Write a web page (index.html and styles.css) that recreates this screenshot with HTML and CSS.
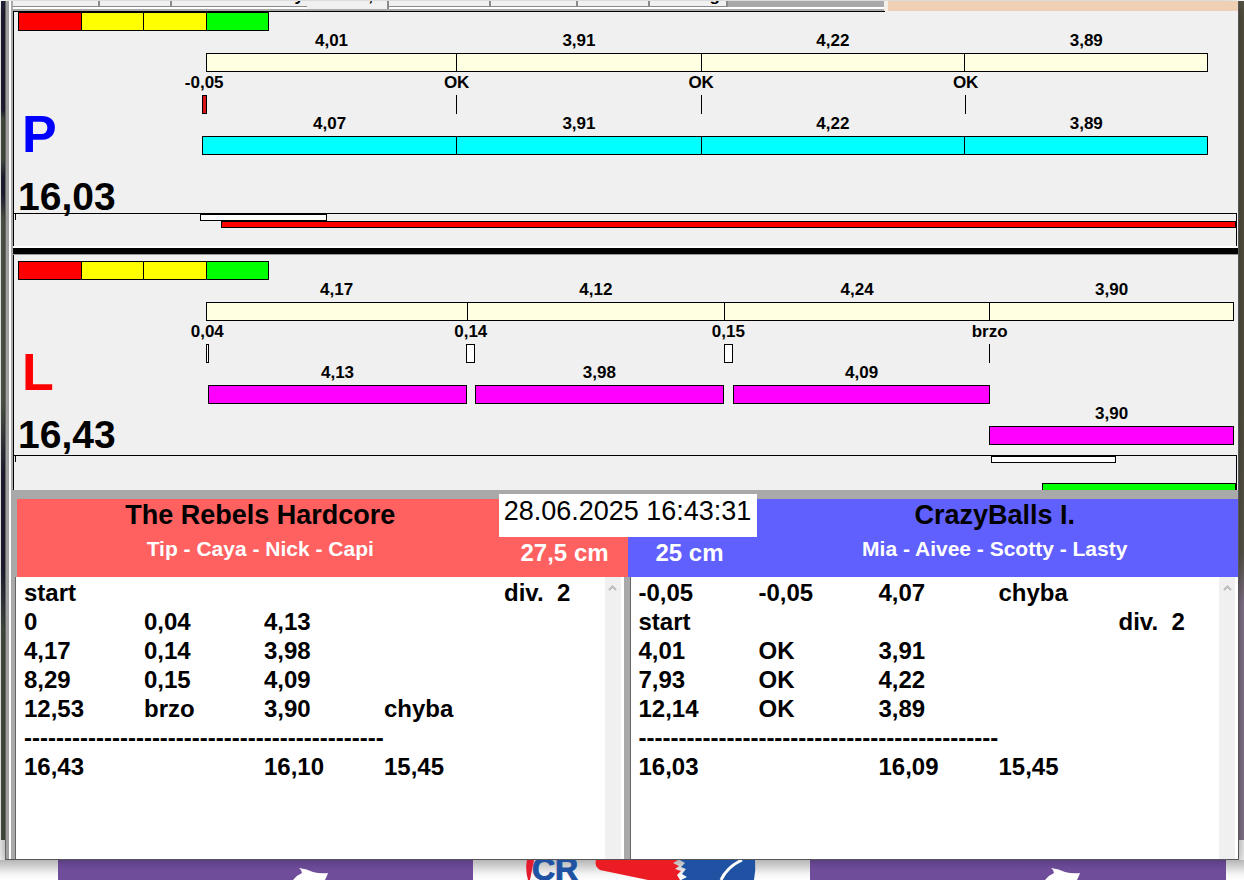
FILE: index.html
```html
<!DOCTYPE html>
<html lang="cs">
<head>
<meta charset="utf-8">
<title>The Rebels Hardcore – CrazyBalls I.</title>
<link rel="stylesheet" href="styles.css">
</head>
<body>
<main class="window">
  <div class="topbar">
    <nav class="tabs" aria-label="Karty">
      <button class="tab tab-narrow" type="button"></button>
      <button class="tab tab-short" type="button"></button>
      <button class="tab tab-wide" type="button"><span>y</span></button>
      <button class="tab tab-active" type="button"><span>,</span></button>
      <button class="tab tab-medium" type="button"></button>
      <button class="tab tab-narrow" type="button"></button>
      <button class="tab tab-short" type="button"></button>
      <button class="tab tab-last" type="button"><span>g</span></button>
    </nav>
    <div class="backdrop"></div>
  </div>

  <section class="lane" aria-label="P">
    <div class="lights"><i class="red"></i><i class="yellow"></i><i class="yellow"></i><i class="green"></i></div>
    <div class="lane-body">
      <div class="lane-side">
        <div class="lane-letter blue-letter">P</div>
        <div class="lane-total">16,03</div>
      </div>
      <div class="tracks">
        <div class="track cream">
          <span class="gap" style="flex-grow:.06"></span>
          <div class="seg" style="flex-grow:4.01"><b>4,01</b><i></i></div>
          <div class="seg" style="flex-grow:3.91"><b>3,91</b><i></i></div>
          <div class="seg" style="flex-grow:4.22"><b>4,22</b><i></i></div>
          <div class="seg" style="flex-grow:3.89"><b>3,89</b><i></i></div>
          <span class="gap" style="flex-grow:.41"></span>
        </div>
        <div class="track marks">
          <div class="mark fault" style="flex-grow:.07"><b>-0,05</b><i></i></div>
          <span class="gap" style="flex-grow:4"></span>
          <div class="mark tick"><b>OK</b><i></i></div>
          <span class="gap" style="flex-grow:3.9"></span>
          <div class="mark tick"><b>OK</b><i></i></div>
          <span class="gap" style="flex-grow:4.22"></span>
          <div class="mark tick"><b>OK</b><i></i></div>
          <span class="gap" style="flex-grow:4.29"></span>
        </div>
        <div class="track cyan">
          <div class="seg" style="flex-grow:4.07"><b>4,07</b><i></i></div>
          <div class="seg" style="flex-grow:3.91"><b>3,91</b><i></i></div>
          <div class="seg" style="flex-grow:4.22"><b>4,22</b><i></i></div>
          <div class="seg" style="flex-grow:3.89"><b>3,89</b><i></i></div>
          <span class="gap" style="flex-grow:.41"></span>
        </div>
      </div>
    </div>
    <div class="overview">
      <div class="strip"><span class="gap" style="flex-grow:186"></span><i class="white" style="flex-grow:125"></i><span class="gap" style="flex-grow:911"></span></div>
      <div class="strip"><span class="gap" style="flex-grow:207"></span><i class="red" style="flex-grow:1015"></i></div>
    </div>
  </section>

  <div class="divider"></div>

  <section class="lane lane-lower" aria-label="L">
    <div class="lights"><i class="red"></i><i class="yellow"></i><i class="yellow"></i><i class="green"></i></div>
    <div class="lane-body">
      <div class="lane-side">
        <div class="lane-letter red-letter">L</div>
        <div class="lane-total">16,43</div>
      </div>
      <div class="tracks">
        <div class="track cream">
          <span class="gap" style="flex-grow:.06"></span>
          <div class="seg" style="flex-grow:4.17"><b>4,17</b><i></i></div>
          <div class="seg" style="flex-grow:4.12"><b>4,12</b><i></i></div>
          <div class="seg" style="flex-grow:4.24"><b>4,24</b><i></i></div>
          <div class="seg" style="flex-grow:3.9"><b>3,90</b><i></i></div>
        </div>
        <div class="track marks">
          <span class="gap" style="flex-grow:.06"></span>
          <div class="mark" style="flex-grow:.04"><b>0,04</b><i></i></div>
          <span class="gap" style="flex-grow:4.12"></span>
          <div class="mark" style="flex-grow:.14"><b>0,14</b><i></i></div>
          <span class="gap" style="flex-grow:3.98"></span>
          <div class="mark" style="flex-grow:.14"><b>0,15</b><i></i></div>
          <span class="gap" style="flex-grow:4.1"></span>
          <div class="mark tick"><b>brzo</b><i></i></div>
          <span class="gap" style="flex-grow:3.9"></span>
        </div>
        <div class="track magenta">
          <span class="gap" style="flex-grow:.1"></span>
          <div class="seg" style="flex-grow:4.13"><b>4,13</b><i></i></div>
          <span class="gap" style="flex-grow:.13"></span>
          <div class="seg" style="flex-grow:3.98"><b>3,98</b><i></i></div>
          <span class="gap" style="flex-grow:.15"></span>
          <div class="seg" style="flex-grow:4.1"><b>4,09</b><i></i></div>
          <span class="gap" style="flex-grow:3.9"></span>
        </div>
        <div class="track magenta">
          <span class="gap" style="flex-grow:12.58"></span>
          <div class="seg" style="flex-grow:3.91"><b>3,90</b><i></i></div>
        </div>
      </div>
    </div>
    <div class="overview">
      <div class="strip"><span class="gap" style="flex-grow:979"></span><i class="white" style="flex-grow:123"></i><span class="gap" style="flex-grow:120"></span></div>
      <div class="strip strip-low"><span class="gap" style="flex-grow:1030"></span><i class="green" style="flex-grow:192"></i></div>
    </div>
  </section>

  <section class="results">
    <time class="clock" datetime="2025-06-28T16:43:31">28.06.2025 16:43:31</time>
    <div class="teams">
      <header class="team team-left">
        <div class="team-names"><h2>The Rebels Hardcore</h2><p>Tip - Caya - Nick - Capi</p></div>
        <div class="jump">27,5 cm</div>
      </header>
      <header class="team team-right">
        <div class="jump">25 cm</div>
        <div class="team-names"><h2>CrazyBalls I.</h2><p>Mia - Aivee - Scotty - Lasty</p></div>
      </header>
    </div>
    <div class="lists">
      <div class="list">
        <table>
          <colgroup><col span="4" class="col-value"><col></colgroup>
          <tr><td>start</td><td></td><td></td><td></td><td>div.  2</td></tr>
          <tr><td>0</td><td>0,04</td><td>4,13</td><td></td><td></td></tr>
          <tr><td>4,17</td><td>0,14</td><td>3,98</td><td></td><td></td></tr>
          <tr><td>8,29</td><td>0,15</td><td>4,09</td><td></td><td></td></tr>
          <tr><td>12,53</td><td>brzo</td><td>3,90</td><td>chyba</td><td></td></tr>
          <tr><td colspan="5">---------------------------------------------</td></tr>
          <tr><td>16,43</td><td></td><td>16,10</td><td>15,45</td><td></td></tr>
        </table>
        <div class="scroll"><svg width="9" height="6" viewBox="0 0 9 6"><path d="M1 5 4.500 1.500 8 5" fill="none" stroke="#bcbcbc" stroke-width="2"/></svg></div>
      </div>
      <div class="list">
        <table>
          <colgroup><col span="4" class="col-value"><col></colgroup>
          <tr><td>-0,05</td><td>-0,05</td><td>4,07</td><td>chyba</td><td></td></tr>
          <tr><td>start</td><td></td><td></td><td></td><td>div.  2</td></tr>
          <tr><td>4,01</td><td>OK</td><td>3,91</td><td></td><td></td></tr>
          <tr><td>7,93</td><td>OK</td><td>4,22</td><td></td><td></td></tr>
          <tr><td>12,14</td><td>OK</td><td>3,89</td><td></td><td></td></tr>
          <tr><td colspan="5">---------------------------------------------</td></tr>
          <tr><td>16,03</td><td></td><td>16,09</td><td>15,45</td><td></td></tr>
        </table>
        <div class="scroll"><svg width="9" height="6" viewBox="0 0 9 6"><path d="M1 5 4.500 1.500 8 5" fill="none" stroke="#bcbcbc" stroke-width="2"/></svg></div>
      </div>
    </div>
  </section>
</main>

<footer class="desktop">
  <div class="banner"><svg width="36" height="20" viewBox="0 0 36 20"><path d="M0 20Q4 15 9 13Q9 10 6 8Q14 9 20 12Q27 14 35 13Q34 16 32 20Z" fill="#fff"/></svg></div>
  <div class="emblem">
    <svg width="232" height="20" viewBox="0 0 232 20">
      <path d="M1 0H8L4 20H2Q-1 9 1 0Z" fill="#e31b2c"/>
      <text x="6" y="20" class="emblem-text">CR</text>
      <path d="M70 0H152L147 3 153 6 149 9 155 11 151 15 154 20H122L74 10Q68 6 70 0Z" fill="#ec1c24"/>
      <path d="M154 0H229Q230 10 228 20H155L161 17 156 14 160 9 155 7 159 3Z" fill="#1f52a3"/>
      <path d="M216 0Q201 7 195 20" fill="none" stroke="#fff" stroke-width="3"/>
    </svg>
  </div>
  <div class="banner"><svg width="36" height="20" viewBox="0 0 36 20"><path d="M0 20Q4 15 9 13Q9 10 6 8Q14 9 20 12Q27 14 35 13Q34 16 32 20Z" fill="#fff"/></svg></div>
</footer>
</body>
</html>
```
FILE: styles.css
```css
* { box-sizing: border-box; }

body {
  margin: 0;
  min-height: 100vh;
  display: flex;
  flex-direction: column;
  font-family: "Liberation Sans", Arial, sans-serif;
  color: #000;
  background:
    linear-gradient(#232338 0 13%, #4c5548 14% 19%, #23233a 21% 23%, #586150 26% 48%, #232338 56% 68%, #4c5548 75%) left 1px top 1px / 4px calc(100% - 41px) no-repeat,
    linear-gradient(#5a5646 0 50%, #5f5b50 66%, #8c7c94 72%) right top 1px / 6px calc(100% - 41px) no-repeat,
    #fff;
}

.window {
  flex: 1;
  display: flex;
  flex-direction: column;
  margin: 1px 5px 0 5px;
  padding-left: 8px;
  border-right: 1px solid #55555a;
  border-bottom: 1px solid #55555a;
  background: linear-gradient(90deg, #666 0 1px, #a0a0a0 1px 4px, #fff 4px 6px, #a9a9a9 6px 8px, #f0f0f0 8px);
  box-shadow: 0 4px 14px rgba(0, 0, 0, .5);
}

.topbar { display: flex; height: 10px; }

.tabs {
  flex: 0 0 871px;
  display: flex;
  height: 10px;
  overflow: hidden;
  background: linear-gradient(#a9a9a9 0 6px, #fff 6px 8px, #a9a9a9 8px);
}

.tab {
  height: 6px;
  padding: 0 10px 2px 0;
  display: flex;
  justify-content: flex-end;
  align-items: flex-end;
  overflow: hidden;
  border: solid #8a8a8a;
  border-width: 0 2px 1px 0;
  background: #f0f0f0;
  font: bold 17px/17px "Liberation Sans", Arial, sans-serif;
}
.tab-narrow { width: 87px; }
.tab-short { width: 72px; }
.tab-wide { width: 135px; padding-right: 3px; border-right: 0; }
.tab-active { width: 82px; height: 8px; padding-right: 14px; padding-bottom: 5px; border-bottom: 0; }
.tab-medium { width: 102px; }
.tab-last { width: 78px; padding-right: 6px; }

.backdrop {
  flex: 1;
  margin-left: 1px;
  border-left: 3px solid #f5efe8;
  background: #efd0b4;
}

.lane {
  display: flex;
  flex-direction: column;
  border-left: 1px solid #000;
  background: #f0f0f0;
}
.lane:not(.lane-lower) { background: linear-gradient(90deg, #000 871px, #f0f0f0 871px) top / 100% 1px no-repeat, #f0f0f0; }
.lane-lower { padding-top: 5px; }

.lights { display: flex; padding: 1px 0 0 4px; }
.lights i { width: 63px; height: 19px; border: 1px solid #000; }
.lights i:nth-child(odd) { width: 64px; }
.lights i + i { margin-left: -1px; }

.red { background: #f00; }
.yellow { background: #ff0; }
.green { background: #0f0; }
.white { background: #fff; }

.lane-body { display: grid; grid-template-columns: 188px minmax(0, 1fr); padding-right: 4px; }
.lane-side { display: flex; flex-direction: column; justify-content: flex-end; padding-left: 4px; height: 182px; }
.lane-lower .lane-side { height: 175px; padding-bottom: 4px; }
.lane-letter { padding-left: 4px; margin-bottom: 16px; font: bold 52px/62px "Liberation Sans", Arial, sans-serif; }
.blue-letter { color: #00f; }
.red-letter { color: #f00; }
.lane-total { font: bold 39px/32px "Liberation Sans", Arial, sans-serif; }

.tracks { font: bold 17px/18px "Liberation Sans", Arial, sans-serif; }
.track { display: flex; white-space: nowrap; }
.gap { flex: 0 1 0; }
.seg, .mark { flex: 0 1 0; min-width: 0; display: flex; flex-direction: column; align-items: center; }
.seg + .seg { margin-left: -1px; }
.seg b { height: 22px; padding-top: 1px; }
.mark b { height: 23px; padding-top: 2px; }
.seg i, .mark i { width: 100%; height: 19px; border: 1px solid #000; }
.mark { min-width: 3px; }
.mark i { background: #fff; }
.fault i { min-width: 5px; background: #d8141c; }
.tick { flex: 0 0 1px; min-width: 1px; }
.tick i { border-width: 0 0 0 1px; }
.cream i { background: #ffffe1; }
.cyan i { background: #0ff; }
.magenta i { background: #f0f; }

.overview {
  height: 33px;
  margin-right: 1px;
  border-top: 1px solid #000;
  border-right: 1px solid #000;
  background: linear-gradient(#000, #000) 1px 0 / 1px 6px no-repeat;
}
.lane-lower .overview { height: 35px; overflow: hidden; }
.strip { display: flex; height: 7px; }
.strip i { flex: 0 1 0; border: 1px solid #000; }
.strip-low { margin-top: 20px; }
.strip-low i { border-bottom: 0; }

.divider { height: 9px; border: solid #fff; border-width: 2px 0 0; border-bottom: 1px solid #999; background: #000; }

.results {
  flex: 1;
  display: flex;
  flex-direction: column;
  position: relative;
  padding: 9px 0 0 2px;
  background: #a9a9a9;
}
.clock {
  position: absolute;
  top: 4px;
  left: 50%;
  width: 258px;
  height: 43px;
  margin-left: -127px;
  background: #fff;
  font-size: 27px;
  line-height: 34px;
  text-align: center;
}
.teams { display: grid; grid-template-columns: 1fr 1fr; padding-left: 2px; }
.team { display: grid; height: 78px; }
.team-left { grid-template-columns: minmax(0, 1fr) 124px; background: #ff6060; }
.team-right { grid-template-columns: 124px minmax(0, 1fr); background: #6060ff; }
.team-names { text-align: center; }
.team h2 { margin: 0; font-size: 27px; line-height: 32px; }
.team p { margin: 0; color: #fff; font-size: 21px; font-weight: bold; line-height: 36px; }
.jump { padding: 38px 0 0 17px; color: #fff; font-size: 24px; font-weight: bold; line-height: 32px; }
.team-right .jump { padding-left: 28px; }

.lists { flex: 1; display: grid; grid-template-columns: repeat(2, minmax(0, 1fr)); gap: 6px; }
.list { display: flex; justify-content: space-between; border-left: 1px solid #666; border-right: 3px solid #fff; background: #fff; }
.list table { flex: 1; min-width: 0; table-layout: fixed; align-self: flex-start; border-spacing: 0; margin: 1px 0 0 8px; }
.col-value { width: 120px; }
.list td { height: 29px; padding: 0; font-size: 24px; font-weight: bold; line-height: 29px; white-space: pre; }
.scroll { flex: 0 0 16px; padding-top: 5px; text-align: center; line-height: 8px; background: #f0f0f0; }

.desktop {
  display: grid;
  grid-template-columns: 415fr 337fr 416fr;
  height: 20px;
  padding: 0 18px 0 58px;
  background: linear-gradient(#b5b5b5, #f4f4f4 14px, #fff);
}
.banner { display: flex; justify-content: center; padding-left: 90px; background: linear-gradient(#5c3f85, #6f4d9b 10px); }
.banner + .emblem { display: flex; padding-left: 53px; }
.emblem-text { font: bold 32px "Liberation Sans", Arial, sans-serif; fill: #1f52a3; stroke: #1f52a3; stroke-width: 1px; }
```
